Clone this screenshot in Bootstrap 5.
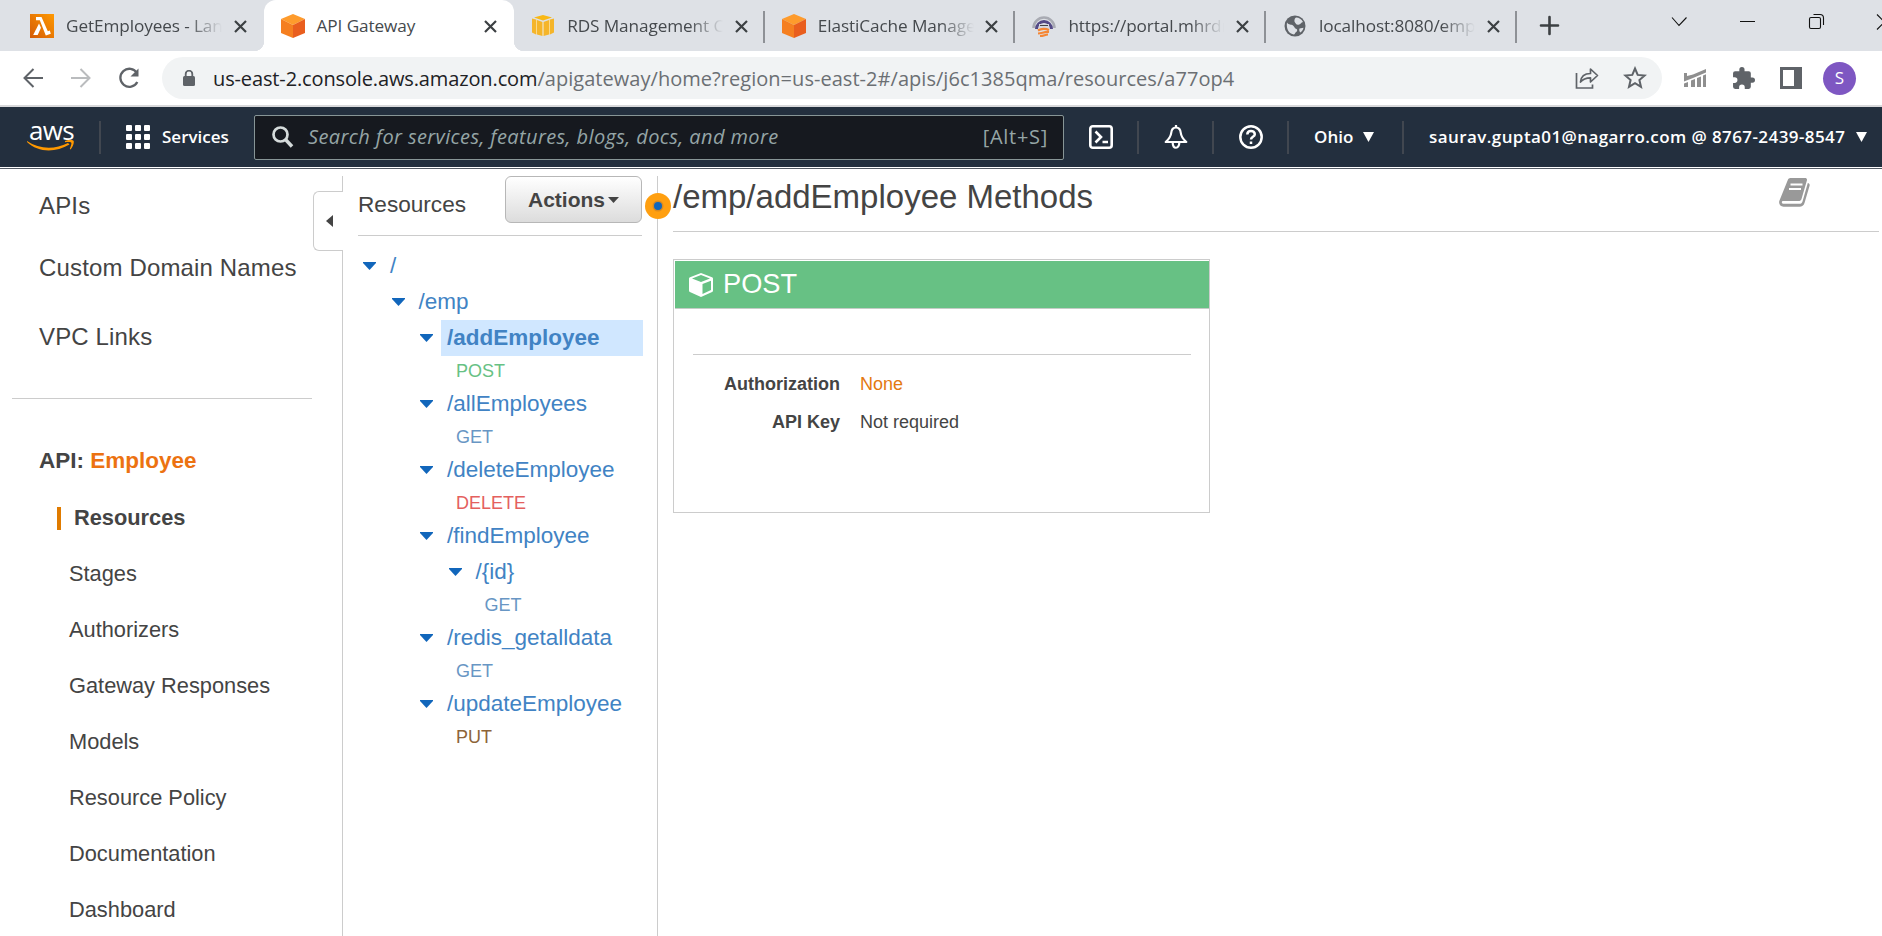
<!DOCTYPE html>
<html lang="en">
<head>
<meta charset="utf-8">
<title>API Gateway</title>
<link href="https://cdn.jsdelivr.net/npm/bootstrap@5.3.0/dist/css/bootstrap.min.css" rel="stylesheet">
<style>
body{height:936px;font-family:"Liberation Sans",Arial,sans-serif;color:#444;background:#fff}
svg{display:block;flex:none}
a{text-decoration:none;color:inherit}
.chrome,.awsbar{font-family:"Open Sans","Noto Sans",sans-serif}
.tabstrip{height:51px;background:#dee1e6;padding-left:13px}
.btab{width:250.6px;padding:1px 17px 0 17px;position:relative}
.btab .ttl{width:162px;margin-left:12px;color:#45494d;font-size:17.2px;letter-spacing:-.1px;line-height:26px}
.btab .fade-end{-webkit-mask-image:linear-gradient(90deg,#000 122px,transparent 156px);mask-image:linear-gradient(90deg,#000 122px,transparent 156px)}
.btab.sep{padding-right:15px;border-right:2px solid #8e9196;border-image:linear-gradient(transparent 12px,#8e9196 12px,#8e9196 42px,transparent 42px) 1}
.btab.on{background:#fff;border-radius:12px 12px 0 0}
.btab.on::before,.btab.on::after{content:"";position:absolute;bottom:0;width:10px;height:10px}
.btab.on::before{left:-10px;background:radial-gradient(circle at 0 0,transparent 10px,#fff 10.5px)}
.btab.on::after{right:-10px;background:radial-gradient(circle at 100% 0,transparent 10px,#fff 10.5px)}
.toolbar{height:56px;border-bottom:2px solid #d9d9db;padding:0 26px 0 23px}
.urlbar{width:1500px;height:42px;border-radius:21px;background:#f1f3f4;margin-left:23px;padding:0 16px 0 21px}
.url{font-size:20px;color:#6b6f73;white-space:nowrap;margin-left:18px;letter-spacing:.04px;padding-top:2px}
.url b{font-weight:400;color:#202124;letter-spacing:-.13px}
.avatar{width:33px;height:33px;background:#7e57c2;font-size:17px;margin-left:21px}
.awsbar{height:60px;background:#232f3e;color:#fff;font-weight:600;font-size:17px;padding-left:27px}
.awsword{display:block;font-size:26px;font-weight:500;line-height:36px;letter-spacing:-.7px;padding:5px 0 0 2px}
.vbar{width:2px;height:33px;background:#414750;flex:none}
.finder{width:810px;height:45px;margin-left:25px;background:#16191f;border:1px solid #879596;border-radius:2px;padding:0 15px 0 17px;font-weight:400;font-size:20px;color:#95a5a6}
.edge{height:2px;border-top:1px solid #fff;background:#545b64}
.side{width:343px;flex:none;padding:6px 0 0;position:relative}
.side::after{content:"";position:absolute;right:0;top:7px;bottom:0;width:1px;background:#ccc}
.side .big{font-size:24px;padding-left:39px;height:62px;letter-spacing:.15px}
.side .api{font-size:22.5px;letter-spacing:0;height:59px}
.side .item{font-size:21.8px;padding-left:69px;height:56px}
.side .bar{width:4px;height:23px;background:#e07b00;margin:0 13px 0 -12px}
.rule{height:1px;background:#ccc}
.handle{right:0;top:22px;width:30px;height:60px;border:1px solid #ccc;border-right:0;border-radius:6px 0 0 6px;background:#fff;z-index:1}
.handle svg{margin-left:12px}
.tree{width:315px;flex:none;padding:7px 16px 0 15px;position:relative}
.tree::after{content:"";position:absolute;right:0;top:7px;bottom:0;width:1px;background:#ccc}
.tree h2{font-size:22.6px;font-weight:400;margin:0;line-height:58px;height:59px}
.actbtn{width:137px;height:47px;border:1px solid #b7b7b7;border-radius:6px;background:linear-gradient(#fff,#dcdcdc);color:#444;font-weight:700;font-size:21px;padding:0}
.res{height:36px;font-size:22.5px;color:#4183c4}
.res svg{margin:-1px 8px 0 0}
.res span{padding:0 6px;height:36px;line-height:35px;flex:1;white-space:nowrap}
.res .sel{background:#d0e7ff;font-weight:700;margin-right:-1px}
.mth{height:30px;font-size:18px;line-height:30px}
.get{color:#6896c4}.post{color:#67c184}.del{color:#e4605e}.put{color:#8d6438}
.grip{right:-12.5px;top:24px;z-index:2}
.main{padding:0 3px 0 15px}
.main h1{font-size:33px;font-weight:400;margin:0;line-height:56px;height:62px}
.mcard{width:537px;height:254px;border:1px solid #ccc;margin-top:27px;padding:1px 0 0 1px}
.mhead{height:48px;background:#67c184;border-bottom:1px solid #c4ccc6;color:#fff;font-size:27.2px;padding-left:14px}
.dl{font-size:18px;height:38px}
.dl b{width:165px;text-align:right;margin-right:20px}
</style>
</head>
<body class="d-flex flex-column overflow-hidden">
<div class="chrome flex-shrink-0">
 <div class="tabstrip d-flex">
  <div class="btab d-flex align-items-center">
   <svg width="24" height="24"><defs><linearGradient id="lg" x1="0" y1="1" x2="1" y2="0"><stop offset="0" stop-color="#d45b07"/><stop offset="1" stop-color="#ff9900"/></linearGradient></defs><path fill="url(#lg)" d="M0 0h24v24H0z"/><path fill="#fff" d="M6 3h5.500l6.300 14.300 2-.7 1 3.200-5 1.700L9.800 6.200H6z"/><path fill="#fff" d="M9 9.500l2 4.200L7.700 21H3.200z"/></svg>
   <div class="ttl fade-end text-nowrap">GetEmployees - Lan</div><svg width="13" height="13" class="ms-auto"><path d="M1 1l11 11M12 1L1 12" stroke="#3c4043" stroke-width="2.200"/></svg>
  </div>
  <div class="btab on d-flex align-items-center">
   <svg width="24" height="24"><path fill="#fe9b2c" d="M12 0l12 5-12 6L0 5z"/><path fill="#f57f20" d="M0 5l12 6v13L0 19z"/><path fill="#e95e1e" d="M24 5l-12 6v13l12-5z"/></svg>
   <div class="ttl text-nowrap">API Gateway</div><svg width="13" height="13" class="ms-auto"><path d="M1 1l11 11M12 1L1 12" stroke="#3c4043" stroke-width="2.200"/></svg>
  </div>
  <div class="btab sep d-flex align-items-center">
   <svg width="24" height="24"><path fill="#f9b814" d="M12 1l9 2.500-9 3-9-3z"/><path fill="#f5b52a" d="M1 4.500l4 1v15l-4-2zM23 4.500l-4 1v15l4-2zM6 6l5.500 2v14L6 20.500zM18 6l-5.500 2v14l5.500-1.500z"/><path stroke="#fbd98a" d="M5.500 5.500v15M18.500 5.500v15M12 8v14"/></svg>
   <div class="ttl fade-end text-nowrap">RDS Management C</div><svg width="13" height="13" class="ms-auto"><path d="M1 1l11 11M12 1L1 12" stroke="#3c4043" stroke-width="2.200"/></svg>
  </div>
  <div class="btab sep d-flex align-items-center">
   <svg width="24" height="24"><path fill="#fe9b2c" d="M12 0l12 5-12 6L0 5z"/><path fill="#f57f20" d="M0 5l12 6v13L0 19z"/><path fill="#e95e1e" d="M24 5l-12 6v13l12-5z"/></svg>
   <div class="ttl fade-end text-nowrap">ElastiCache Manage</div><svg width="13" height="13" class="ms-auto"><path d="M1 1l11 11M12 1L1 12" stroke="#3c4043" stroke-width="2.200"/></svg>
  </div>
  <div class="btab sep d-flex align-items-center">
   <svg width="24" height="24" fill="none"><path d="M1.500 14a10.500 10.500 0 1 1 21 0" stroke="#a9abb3" stroke-width="2.500"/><path d="M4.500 15a7.500 7.500 0 1 1 15 0" stroke="#544a86" stroke-width="3"/><path d="M7 10h10v4H7z" fill="#d5d8e0"/><path d="M8 11.500h8" stroke="#444"/><path d="M6 16.500c3-2 8-2 11-.5M6 19.500c4 0 6-2 11-1.500M8 22c4 0 5-1.500 8-1.500" stroke="#f58634" stroke-width="2.200"/></svg>
   <div class="ttl fade-end text-nowrap">https://portal.mhrdn</div><svg width="13" height="13" class="ms-auto"><path d="M1 1l11 11M12 1L1 12" stroke="#3c4043" stroke-width="2.200"/></svg>
  </div>
  <div class="btab sep d-flex align-items-center">
   <svg width="24" height="24"><circle cx="12" cy="12" r="10.500" fill="#5f6368"/><path fill="#dee1e6" d="M4 8.500c2 3 4 1.500 6 3 2 1.800 1.500 3 3.500 3.500 1 .5 1 2.500-.5 3-1 .8-.8 2-2 2.500C6 20 3 15 4 8.500zM13 3.500c3 0 5.500 1.500 7 4.500-2 .3-2.500 2.500-4.500 2.700C13 11 13 9.500 12 8.500c-1-1-.8-4 1-5zM16.500 14.500l4-.8c-.4 2-1.500 3.600-3 4.800-1.200-1-1.500-2.500-1-4z"/></svg>
   <div class="ttl fade-end text-nowrap">localhost:8080/emp</div><svg width="13" height="13" class="ms-auto"><path d="M1 1l11 11M12 1L1 12" stroke="#3c4043" stroke-width="2.200"/></svg>
  </div>
  <svg width="365" height="51" fill="none" class="ms-auto" viewBox="1517 0 365 51"><path d="M1541 25.500h17M1549.500 17v17" stroke="#3c4043" stroke-width="2.600" stroke-linecap="round"/><path d="M1672 17.500l7 8 7.500-8M1740 21.500h15M1877 14.500L1892 29.500M1877 29.500L1892 14.500M1813.500 14.500h6.500a3.500 3.500 0 0 1 3.500 3.500v7" stroke="#111" stroke-width="1.100"/><rect x="1809.500" y="17.500" width="11" height="11" rx="1.500" stroke="#111" stroke-width="1.100"/></svg>
 </div>
 <div class="toolbar d-flex align-items-center">
  <svg width="20" height="20" fill="none" stroke="#5f6368" stroke-width="2"><path d="M20 10H2M10.500 1L1.500 10l9 9"/></svg>
  <svg width="20" height="20" fill="none" stroke="#babcbe" stroke-width="2" style="margin-left:28px"><path d="M0 10h18M9.500 1l9 9-9 9"/></svg>
  <svg width="22" height="22" fill="none" style="margin-left:26px" viewBox="-3 0 22 22"><path d="M17 6A9 9 0 1 0 17.300 15" stroke="#5f6368" stroke-width="2.300"/><path d="M18.500 1.500v8h-8z" fill="#5f6368"/></svg>
  <div class="urlbar d-flex align-items-center">
   <svg width="12" height="17"><rect y="6" width="12" height="10" rx="1.500" fill="#5f6368"/><path d="M2.700 7V4a3.300 3.300 0 0 1 6.600 0v3" fill="none" stroke="#5f6368" stroke-width="1.800"/></svg>
   <div class="url"><b>us-east-2.console.aws.amazon.com</b><span>/apigateway/home?region=us-east-2#/apis/j6c1385qma/resources/a77op4</span></div>
   <svg width="24" height="22" fill="none" stroke="#5f6368" stroke-width="1.700" class="ms-auto"><path d="M1.500 6v15h16v-3.500"/><path d="M5.500 15c.5-6 4-8.500 10-8.500V2l7 6.500-7 6.500v-4.200c-4.500 0-7.500 1-10 4.200z" stroke-linejoin="round"/></svg>
   <svg width="24" height="24" viewBox="0 0 24 24" fill="none" stroke="#5f6368" stroke-width="2" style="margin-left:24px;margin-right:-1px"><path d="M12 2.500l2.700 6.400 6.900.6-5.200 4.600 1.600 6.800-6-3.700-6 3.700 1.600-6.800-5.200-4.600 6.900-.6z"/></svg>
  </div>
  <svg width="24" height="20" style="margin-left:21px" fill="#8f8f8f"><path d="M1 5h3v3l6-1.500L23 1v3.500L10 10 1 13.500zM1 15.500l4-1.500v5H1zM8 12.500l4-1.500v8H8zM14 10l4-1.500V19h-4zM20 7.500l3-1.200V19h-3z"/></svg>
  <svg width="23" height="23" viewBox="1 1 22 22" style="margin-left:25px" fill="#5f6368"><path d="M20.500 11H19V7a2 2 0 0 0-2-2h-4V3.500a2.500 2.500 0 0 0-5 0V5H4a2 2 0 0 0-2 2v3.800h1.500a2.700 2.700 0 0 1 0 5.400H2V20a2 2 0 0 0 2 2h3.800v-1.500a2.700 2.700 0 0 1 5.400 0V22H17a2 2 0 0 0 2-2v-4h1.500a2.500 2.500 0 0 0 0-5z"/></svg>
  <svg width="22" height="22" style="margin-left:25px"><path fill="#5f6368" fill-rule="evenodd" d="M0 0h22v22H0zM3 3v16h11V3z"/></svg>
  <div class="avatar rounded-circle text-white d-flex align-items-center justify-content-center flex-shrink-0">S</div>
 </div>
</div>
<div class="awsbar d-flex align-items-center flex-shrink-0">
 <div class="position-relative" style="width:48px;height:60px"><span class="awsword">aws</span>
  <svg class="position-absolute start-0" style="top:33px" width="48" height="13"><path fill="#f90" d="M0 1c12 8 27 9 41 2l1.500 1.500C28 13 11 12.500 0 2zM38 1c3-1.500 7-1.500 8.500-.3C47.500 2 46 7 43.500 9.500l-.7-.5c1-2.500 2-5.500 1.500-6.300C43.500 2 40.500 2 38 2.200z"/></svg></div>
 <div class="vbar" style="margin-left:24px"></div>
 <svg width="24" height="24" style="margin-left:25px" fill="#fff"><g id="r"><rect width="6" height="6" rx="1"/><rect x="9" width="6" height="6" rx="1"/><rect x="18" width="6" height="6" rx="1"/></g><use href="#r" y="9"/><use href="#r" y="18"/></svg>
 <span style="margin-left:12px;width:67px">Services</span>
 <div class="finder d-flex align-items-center flex-shrink-0">
  <svg width="22" height="22" fill="none" stroke="#d5dbdb"><circle cx="8.500" cy="8.500" r="7" stroke-width="2.700"/><path d="M13.500 13.500l6.500 7" stroke-width="3.500"/></svg>
  <i style="margin-left:14px;letter-spacing:.39px">Search for services, features, blogs, docs, and more</i><span class="ms-auto" style="letter-spacing:.7px">[Alt+S]</span>
 </div>
 <svg width="24" height="24" style="margin-left:25px" fill="none" stroke="#fff" stroke-width="2.600"><rect x="1.300" y="1.300" width="21.400" height="21.400" rx="2.500"/><path d="M6.500 6.500l5.500 5.500-5.500 5.500M13.500 17h5.500"/></svg>
 <div class="vbar" style="margin-left:24px"></div>
 <svg width="24" height="24" style="margin-left:25px" fill="none" stroke="#fff" stroke-width="2.200"><path d="M12 2.500C9 2.500 7.500 5 7.200 8c-.4 4-2.700 6.500-5.500 9h20.600c-2.800-2.500-5.100-5-5.500-9C16.500 5 15 2.500 12 2.500z" stroke-linejoin="round"/><path d="M12 0v3M8.700 17.500c0 7 6.600 7 6.600 0"/></svg>
 <div class="vbar" style="margin-left:24px"></div>
 <svg width="24" height="24" style="margin-left:25px" fill="none" stroke="#fff" stroke-width="2.500"><circle cx="12" cy="12" r="10.700"/><path d="M8.300 9.500C8.300 7 10 6 12 6s3.800 1.200 3.800 3.200c0 2.700-3.800 2.500-3.800 5.300M12 16.500V19"/></svg>
 <div class="vbar" style="margin-left:24px"></div>
 <span style="margin-left:25px;width:40px">Ohio</span>
 <svg width="11" height="10" style="margin-left:9px"><path d="M0 0h11L5.500 10z" fill="#fff"/></svg>
 <div class="vbar" style="margin-left:28px"></div>
 <span class="text-nowrap" style="margin-left:25px;width:416px;letter-spacing:.42px">saurav.gupta01@nagarro.com @ 8767-2439-8547</span>
 <svg width="11" height="10" style="margin-left:11px"><path d="M0 0h11L5.500 10z" fill="#fff"/></svg>
</div>
<div class="edge flex-shrink-0"></div>
<div class="d-flex flex-grow-1">
 <nav class="side">
  <div class="handle position-absolute d-flex align-items-center"><svg width="7" height="12"><path d="M7 0v12L0 6z" fill="#444"/></svg></div>
  <div class="big d-flex align-items-center">APIs</div>
  <div class="big d-flex align-items-center">Custom Domain Names</div>
  <div class="big d-flex align-items-center" style="height:76px">VPC Links</div>
  <div class="rule" style="margin:23px 31px 32px 12px"></div>
  <div class="big api d-flex align-items-center fw-bold"><span>API: <a style="color:#ec7211">Employee</a></span></div>
  <div class="item d-flex align-items-center fw-bold"><i class="bar"></i>Resources</div>
  <div class="item d-flex align-items-center">Stages</div>
  <div class="item d-flex align-items-center">Authorizers</div>
  <div class="item d-flex align-items-center">Gateway Responses</div>
  <div class="item d-flex align-items-center">Models</div>
  <div class="item d-flex align-items-center">Resource Policy</div>
  <div class="item d-flex align-items-center">Documentation</div>
  <div class="item d-flex align-items-center">Dashboard</div>
 </nav>
 <section class="tree">
  <svg class="grip position-absolute" width="26" height="26"><circle cx="13" cy="13" r="13" fill="#ff9f10"/><circle cx="13" cy="13" r="5.500" fill="#d98a20"/><circle cx="13" cy="13" r="4" fill="#1166bb"/></svg>
  <div class="d-flex justify-content-between"><h2>Resources</h2>
   <button class="btn actbtn d-flex align-items-center justify-content-center">Actions<svg width="11" height="6" style="margin-left:3px"><path d="M0 0h11L5.500 6z" fill="#444"/></svg></button></div>
  <div class="rule"></div>
  <div id="tree" style="margin-top:12px"></div>
 </section>
 <main class="main flex-grow-1">
  <div class="d-flex justify-content-between"><h1>/emp/addEmployee Methods</h1>
   <svg width="31" height="29" style="margin:9px 69px 0 0"><path fill="#999" d="M9 1.500C9.500.5 10.500 0 12 0h14c1.500 0 2.300 1 1.900 2.500L22.500 21c-.5 1.500-1.500 2-3 2H4.500c-1.500 0-2 1-1.500 2 .3.600 1 .8 2 .8h15.500c1.500 0 2.500-.8 3-2.300L28.800 5c1.500.3 2.200 1.200 1.700 3L25.500 25c-.8 2.500-2.500 3.800-5 3.800H4.500C1.500 28.800-.5 26 .3 23z"/><path stroke="#fff" stroke-width="2" d="M11.500 6.500h12M10 11h12"/></svg></div>
  <div class="rule"></div>
  <div class="mcard">
   <div class="mhead d-flex align-items-center"><svg width="24" height="24" viewBox="0 0 24 24"><path fill="#fff" fill-rule="evenodd" d="M12 0l11 4.200c.6.200 1 .8 1 1.400v11.900c0 .7-.3 1.200-.9 1.500L12 24 .9 19C.3 18.700 0 18.200 0 17.500V5.600c0-.6.4-1.200 1-1.400zM12 2L3 5.500 12 9l9-3.500zM13.500 11v10l8.500-4V7.700z"/></svg><span style="margin-left:10px">POST</span></div>
   <div class="rule" style="margin:45px 18px 16px 18px"></div>
   <div class="dl d-flex"><b>Authorization</b><span style="color:#e47911">None</span></div>
   <div class="dl d-flex"><b>API Key</b><span>Not required</span></div>
  </div>
 </main>
</div>
<script src="https://cdn.jsdelivr.net/npm/bootstrap@5.3.0/dist/js/bootstrap.bundle.min.js"></script>
<script>
// depth, label, css class; labels starting with "/" are resources, the others are methods
const rows=[[0,'/'],[1,'/emp'],[2,'/addEmployee','sel'],[2,'POST','post'],[2,'/allEmployees'],[2,'GET','get'],[2,'/deleteEmployee'],[2,'DELETE','del'],[2,'/findEmployee'],[3,'/{id}'],[3,'GET','get'],[2,'/redis_getalldata'],[2,'GET','get'],[2,'/updateEmployee'],[2,'PUT','put']];
document.getElementById('tree').innerHTML=rows.map(([d,t,c=''])=>t[0]==='/'
 ?`<div class="res d-flex align-items-center" style="padding-left:${5+d*28.5}px"><svg width="13" height="8"><path d="M0 0h13v1L6.500 8 0 1z" fill="#1166bb"/></svg><span class="${c}"><a>${t}</a></span></div>`
 :`<div class="mth ${c}" style="padding-left:${41+d*28.5}px">${t}</div>`).join('');
</script>
</body>
</html>
